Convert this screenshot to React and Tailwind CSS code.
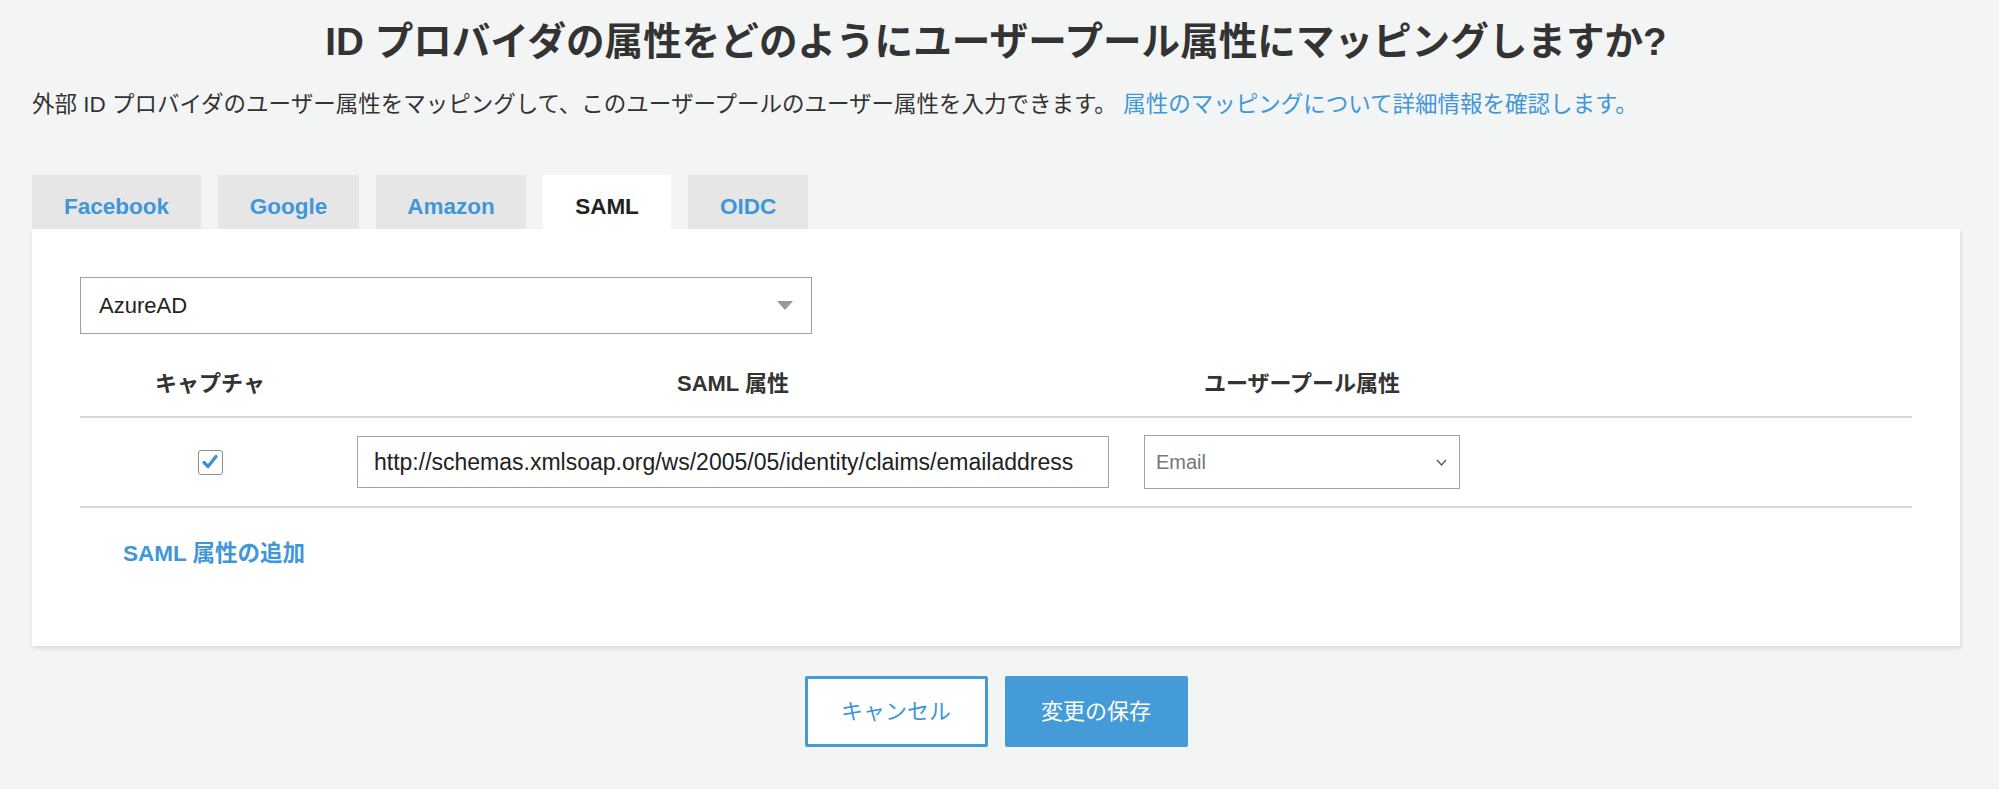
import React from "react";

const tabs = [
  { label: "Facebook", w: "w-[169px]" },
  { label: "Google", w: "w-[141px]" },
  { label: "Amazon", w: "w-[150px]" },
  { label: "SAML", w: "w-[128px]" },
  { label: "OIDC", w: "w-[120px]" },
];

function Tab({ label, w, active }) {
  return (
    <div
      className={
        "flex h-[54px] items-center justify-center rounded-t-[2px] pt-[9px] text-[22.5px] font-bold " +
        w +
        (active ? " bg-white text-[#222]" : " bg-[#e7e6e7] text-[#3f97d8]")
      }
    >
      {label}
    </div>
  );
}

function Checkbox() {
  return (
    <div className="flex h-[25px] w-[25px] items-center justify-center rounded-[3px] border border-[#8c8c8c] bg-white">
      <svg width="18" height="18" viewBox="0 0 18 18">
        <path d="M3 9.5 L7 13.5 L15 3.5" fill="none" stroke="#3f8fd2" strokeWidth="3.2" strokeLinecap="round" strokeLinejoin="round" />
      </svg>
    </div>
  );
}

export default function App() {
  return (
    <div className="min-h-screen bg-[#f3f5f5] pl-8 pr-[39px] pt-[17px] text-[#333] font-['Liberation_Sans','Noto_Sans_CJK_JP',sans-serif]">
      <h1 className="text-center text-[38.6px] font-bold leading-[50px]">
        ID プロバイダの属性をどのようにユーザープール属性にマッピングしますか?
      </h1>
      <p className="mt-[23px] text-[22.5px] leading-[30px]">
        外部 ID プロバイダのユーザー属性をマッピングして、このユーザープールのユーザー属性を入力できます。{" "}
        <a className="text-[#3f97d8]">属性のマッピングについて詳細情報を確認します。</a>
      </p>

      <div className="mt-[55px] flex gap-[17px]">
        {tabs.map((t) => (
          <Tab key={t.label} label={t.label} w={t.w} active={t.label === "SAML"} />
        ))}
      </div>

      <div className="bg-white px-12 pb-[77px] pt-12 shadow-[1px_2px_4px_rgba(0,0,0,0.12)]">
        <div className="flex h-[57px] w-[732px] items-center justify-between border border-[#9f9f9f] pl-[18px] pr-[18px] text-[22px] text-[#222]">
          <span>AzureAD</span>
          <svg width="16" height="9" viewBox="0 0 16 9">
            <polygon points="0,0 16,0 8,9" fill="#999" />
          </svg>
        </div>

        <div className="mt-[17px] flex h-[67px] items-center border-b-2 border-[#d9d9d9] text-[22px] font-bold">
          <div className="w-[260px] text-center">キャプチャ</div>
          <div className="w-[786px] text-center">SAML 属性</div>
          <div className="w-[352px] text-center">ユーザープール属性</div>
        </div>

        <div className="flex h-[90px] items-center border-b-2 border-[#d9d9d9]">
          <div className="flex w-[260px] justify-center">
            <Checkbox />
          </div>
          <div className="w-[786px] px-[17px]">
            <div className="flex h-[52px] items-center border border-[#a3a3a3] px-[16px] text-[23px] text-[#222]">
              http://schemas.xmlsoap.org/ws/2005/05/identity/claims/emailaddress
            </div>
          </div>
          <div className="w-[352px] px-[18px]">
            <div className="flex h-[54px] items-center justify-between border border-[#a3a3a3] pl-[11px] pr-[12px] text-[20px] text-[#777]">
              <span>Email</span>
              <svg width="11" height="7" viewBox="0 0 11 7">
                <path d="M1 1 L5.5 6 L10 1" fill="none" stroke="#555" strokeWidth="1.3" />
              </svg>
            </div>
          </div>
        </div>

        <div className="mt-[31px] pl-[43px] text-[22.5px] font-bold leading-[30px] text-[#3f97d8]">
          SAML 属性の追加
        </div>
      </div>

      <div className="mt-[30px] flex justify-center gap-[17px]">
        <button className="h-[71px] w-[183px] rounded-[2px] border-[3px] border-[#449bd7] bg-white text-[22px] text-[#3f97d8]">
          キャンセル
        </button>
        <button className="h-[71px] w-[183px] rounded-[2px] bg-[#449bd7] text-[22px] text-white">
          変更の保存
        </button>
      </div>
    </div>
  );
}
